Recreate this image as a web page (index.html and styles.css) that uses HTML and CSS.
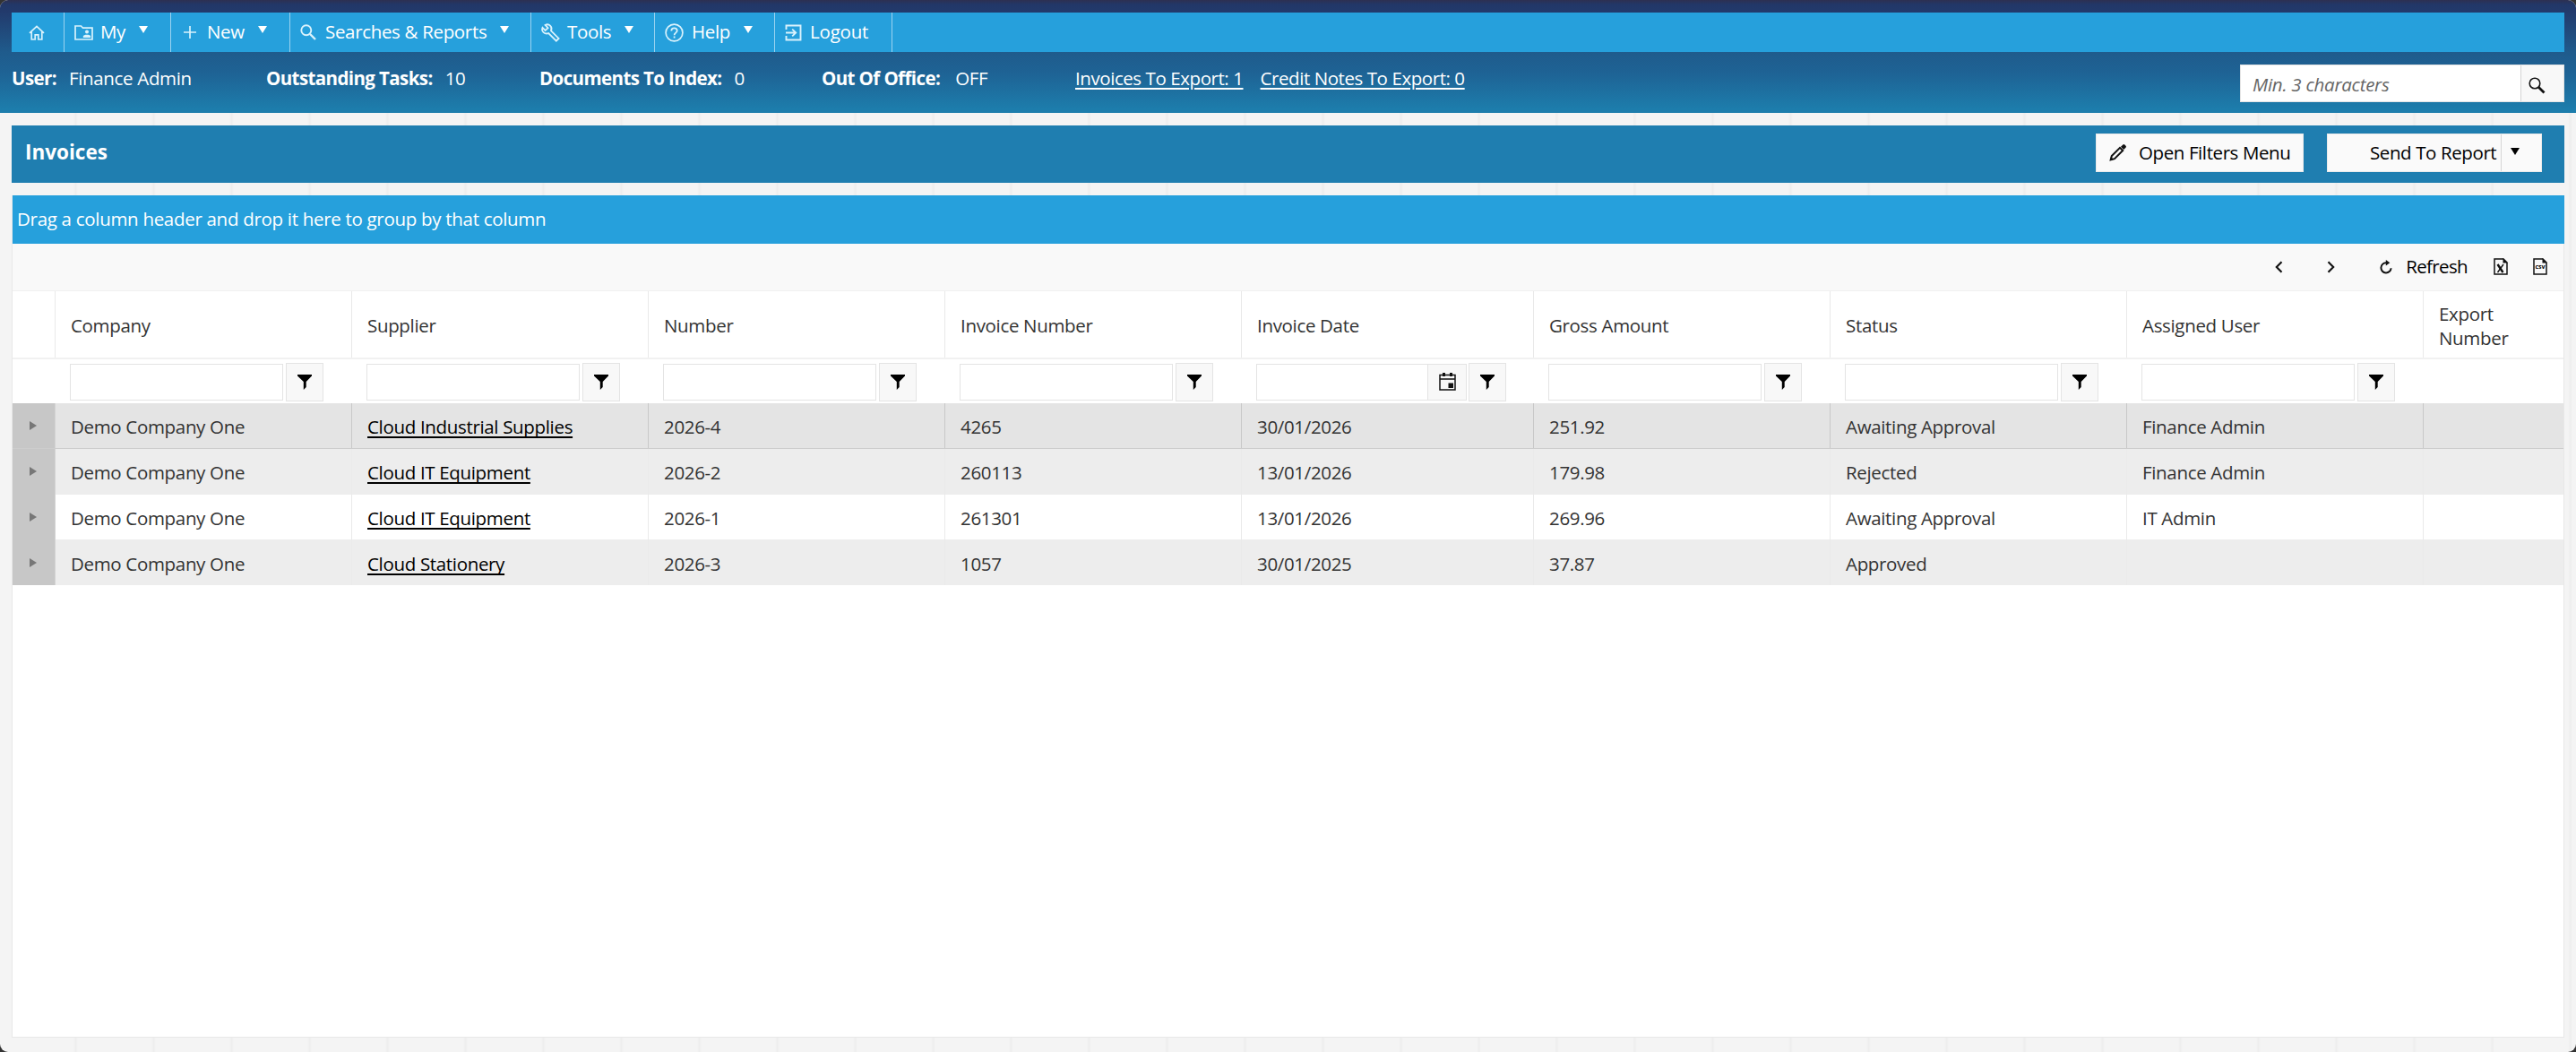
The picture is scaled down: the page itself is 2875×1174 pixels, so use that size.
FILE: index.html
```html
<!DOCTYPE html>
<html lang="en">
<head>
<meta charset="utf-8">
<title>Invoices</title>
<link rel="stylesheet" href="styles.css">
</head>
<body>
<div class="app">
  <header class="top">
    <nav class="menu">
      <a class="item home"><svg width="18" height="17" viewBox="0 0 18 17"><path d="M1 8.8 9 1.3l8 7.5M3.2 7.5V16h4v-5.2h3.6V16h4V7.5" fill="none" stroke="currentColor" stroke-width="1.7"/></svg></a>
      <a class="item my"><svg width="21" height="17" viewBox="0 0 21 17"><path d="M1 1h6.5l2 2.2H20V16H1z" fill="none" stroke="currentColor" stroke-width="1.7"/><circle cx="14" cy="7.6" r="2" fill="currentColor"/><path d="M9.8 14v-1.3c0-2.6 8.4-2.6 8.4 0V14z" fill="currentColor"/></svg><span>My</span><i class="caret"></i></a>
      <a class="item new"><svg width="14" height="14" viewBox="0 0 14 14"><path d="M7 0v14M0 7h14" stroke="currentColor" stroke-width="1.7"/></svg><span>New</span><i class="caret"></i></a>
      <a class="item searches"><svg width="18" height="18" viewBox="0 0 18 18"><circle cx="6.8" cy="6.8" r="5.5" fill="none" stroke="currentColor" stroke-width="1.9"/><path d="m11 11 6 6" stroke="currentColor" stroke-width="2.4"/></svg><span>Searches &amp; Reports</span><i class="caret"></i></a>
      <a class="item tools"><svg width="21" height="21" viewBox="0 0 21 21"><path d="M1.5 4.8 4.6 8l3-2.8L4.5 2C8.600 -.4 13 4 11 8.300l8.600 8.600-2.800 2.800L8.200 11.100C4 12.700-.2 8.800 1.500 4.800z" fill="none" stroke="currentColor" stroke-width="1.8"/></svg><span>Tools</span><i class="caret"></i></a>
      <a class="item help"><svg width="21" height="21" viewBox="0 0 21 21"><circle cx="10.500" cy="10.500" r="9.400" fill="none" stroke="currentColor" stroke-width="1.700"/><path d="M7.300 8.500c0-4.200 6.400-4 6.400-.2 0 2.300-3.100 2.400-3.100 4.900M10.600 14.600v2" fill="none" stroke="currentColor" stroke-width="1.800"/></svg><span>Help</span><i class="caret"></i></a>
      <a class="item logout"><svg width="19" height="19" viewBox="0 0 19 19"><path d="M1.500 6V1.500h16v16h-16V13M1 9.500h10.500M8.200 5.600l4 3.900-4 3.900" fill="none" stroke="currentColor" stroke-width="1.900"/></svg><span>Logout</span></a>
    </nav>
    <div class="status">
      <div class="stat user"><b>User:</b><span>Finance Admin</span></div>
      <div class="stat tasks"><b>Outstanding Tasks:</b><span>10</span></div>
      <div class="stat docs"><b>Documents To Index:</b><span>0</span></div>
      <div class="stat office"><b>Out Of Office:</b><span>OFF</span></div>
      <a class="export">Invoices To Export: 1</a>
      <a class="export">Credit Notes To Export: 0</a>
      <div class="search">
        <span class="hint">Min. 3 characters</span>
        <span class="go"><svg width="19" height="19" viewBox="0 0 19 19"><circle cx="7" cy="7" r="5.800" fill="none" stroke="#111" stroke-width="1.600"/><path d="m11.200 11.200 6.300 6.300" stroke="#111" stroke-width="2.800"/></svg></span>
      </div>
    </div>
  </header>

  <section class="titlebar">
    <h1>Invoices</h1>
    <button class="btn filters"><svg width="20" height="20" viewBox="0 0 20 20"><path d="M1.700 18.300 2.800 14 12 4.800l3.200 3.200L6 17.200z" fill="none" stroke="#111" stroke-width="2"/><path d="m13 3.800 2.300-2.300q1-1 2 0l1.200 1.200q1 1 0 2L16.200 7zM1 19l1-4 3 3z" fill="#111"/></svg><span>Open Filters Menu</span></button>
    <button class="btn report"><span class="label">Send To Report</span><span class="drop"><i class="caret"></i></span></button>
  </section>

  <main class="grid">
    <div class="groupbar">Drag a column header and drop it here to group by that column</div>
    <div class="toolbar">
      <svg class="prev" width="9" height="14" viewBox="0 0 9 14"><path d="M7.500 1.200 1.800 7l5.700 5.800" fill="none" stroke="#111" stroke-width="2.100"/></svg>
      <svg class="next" width="9" height="14" viewBox="0 0 9 14"><path d="M1.500 1.200 7.200 7l-5.700 5.800" fill="none" stroke="#111" stroke-width="2.100"/></svg>
      <svg class="reload" width="14" height="16" viewBox="0 0 14 16"><path d="M8.500 3.300H7a5.600 5.600 0 1 0 5.600 6" fill="none" stroke="#111" stroke-width="2"/><path d="M6.800 0v6.600l4.500-3.300z" fill="#111"/></svg>
      <span>Refresh</span>
      <svg class="excel" width="16" height="19" viewBox="0 0 16 19"><path d="M1 1h10l4 4v13H1z" fill="none" stroke="#111" stroke-width="1.500"/><path d="M10.500 0v5.500H16z" fill="#111"/><path d="m4.500 7 6 9" stroke="#111" stroke-width="2.400"/><path d="m11 7-6.500 9" stroke="#111" stroke-width="1.400"/></svg>
      <svg class="csv" width="16" height="19" viewBox="0 0 16 19"><path d="M1 1h10l4 4v13H1z" fill="none" stroke="#111" stroke-width="1.500"/><path d="M10.500 0v5.500H16z" fill="#111"/><text x="8" y="12.400" class="csvtext">csv</text></svg>
    </div>
    <div class="row head">
      <div></div><div>Company</div><div>Supplier</div><div>Number</div><div>Invoice Number</div><div>Invoice Date</div><div>Gross Amount</div><div>Status</div><div>Assigned User</div><div>Export<br>Number</div>
    </div>
    <svg class="defs" width="0" height="0"><symbol id="funnel" viewBox="0 0 16 17"><path d="M0 0h16v1.500L9.700 8v6L6.800 17V8L0 1.500z"/></symbol></svg>
    <div class="row filter">
      <div></div>
      <div><span class="box"></span><span class="fbtn"><svg width="16" height="17"><use href="#funnel"/></svg></span></div>
      <div><span class="box"></span><span class="fbtn"><svg width="16" height="17"><use href="#funnel"/></svg></span></div>
      <div><span class="box"></span><span class="fbtn"><svg width="16" height="17"><use href="#funnel"/></svg></span></div>
      <div><span class="box"></span><span class="fbtn"><svg width="16" height="17"><use href="#funnel"/></svg></span></div>
      <div class="datecell"><span class="box"><span class="cal"><svg width="19" height="20" viewBox="0 0 19 20"><path d="M1 2.500h17V19H1zM1 7h17" fill="none" stroke="#111" stroke-width="1.500"/><path d="M4 0h3v4H4zM12 0h3v4h-3zM10.500 11.500H16v5.500h-5.500z" fill="#111"/></svg></span></span><span class="fbtn"><svg width="16" height="17"><use href="#funnel"/></svg></span></div>
      <div><span class="box"></span><span class="fbtn"><svg width="16" height="17"><use href="#funnel"/></svg></span></div>
      <div><span class="box"></span><span class="fbtn"><svg width="16" height="17"><use href="#funnel"/></svg></span></div>
      <div><span class="box"></span><span class="fbtn"><svg width="16" height="17"><use href="#funnel"/></svg></span></div>
      <div></div>
    </div>
    <div class="row data selected"><div><i class="expand"></i></div><div>Demo Company One</div><div><a>Cloud Industrial Supplies</a></div><div>2026-4</div><div>4265</div><div>30/01/2026</div><div>251.92</div><div>Awaiting Approval</div><div>Finance Admin</div><div></div></div>
    <div class="row data alt"><div><i class="expand"></i></div><div>Demo Company One</div><div><a>Cloud IT Equipment</a></div><div>2026-2</div><div>260113</div><div>13/01/2026</div><div>179.98</div><div>Rejected</div><div>Finance Admin</div><div></div></div>
    <div class="row data"><div><i class="expand"></i></div><div>Demo Company One</div><div><a>Cloud IT Equipment</a></div><div>2026-1</div><div>261301</div><div>13/01/2026</div><div>269.96</div><div>Awaiting Approval</div><div>IT Admin</div><div></div></div>
    <div class="row data alt"><div><i class="expand"></i></div><div>Demo Company One</div><div><a>Cloud Stationery</a></div><div>2026-3</div><div>1057</div><div>30/01/2025</div><div>37.87</div><div>Approved</div><div></div><div></div></div>
  </main>
</div>
</body>
</html>
```
FILE: styles.css
```css
* { box-sizing: border-box; }
body {
  margin: 0;
  background: #333;
  font: 20.5px/27px "Open Sans", "Noto Sans", sans-serif;
  letter-spacing: -0.33px;
  color: #333;
}
svg { display: block; flex: none; overflow: visible; }
.app {
  height: 1174px;
  border-radius: 9px;
  overflow: hidden;
  display: flex;
  flex-direction: column;
  background: repeating-linear-gradient(90deg, #f4f4f4 0 83px, #eeeeee 84px 86px, #f4f4f4 87px) -0.5px 0, #f4f4f4;
}

/* header */
.top {
  height: 126px;
  padding: 14px 13px 0;
  color: #fff;
  background: linear-gradient(#2d3051 0, #223768 5px, #223a6c 13px, #1f5b8c 58px, #1e6395 82px, #1d7dac 122px);
}
.menu { display: flex; height: 44px; background: #26a0dc; }
.item {
  display: flex;
  align-items: center;
  border-right: 1px solid #9bd3f0;
  color: #fff;
}
.item svg { color: #d9f2fc; }
.item span { margin-top: -1px; white-space: nowrap; }
.item .caret { margin: -6px 0 0 15px; }
.caret {
  width: 0;
  border: 5px solid transparent;
  border-top: 8px solid currentColor;
  border-bottom: 0;
}
.home { width: 59px; padding-left: 19px; }
.my { width: 119px; padding-left: 11px; }
.my span { margin-left: 8px; }
.new { width: 133px; padding-left: 14px; }
.new span { margin-left: 12px; }
.searches { width: 269px; padding-left: 11px; }
.searches span { margin-left: 10px; }
.tools { width: 138px; padding-left: 11px; }
.tools span { margin-left: 8px; }
.help { width: 134px; padding-left: 11px; }
.help span { margin-left: 9px; }
.logout { width: 131px; padding-left: 11px; }
.logout span { margin-left: 9px; letter-spacing: -0.2px; }

.status { display: flex; padding-top: 16px; }
.stat { display: flex; gap: 14px; white-space: nowrap; }
.stat b { letter-spacing: -0.6px; }
.user { width: 284px; }
.tasks { width: 305px; }
.docs { width: 315px; }
.office { width: 283px; gap: 17px; }
.export {
  margin-right: 19px;
  white-space: nowrap;
  letter-spacing: -0.43px;
  text-decoration: underline 1.5px;
  text-underline-offset: 3px;
}
.search {
  width: 362px;
  height: 42px;
  margin: -2px 0 0 auto;
  display: flex;
  background: #fff;
  border: 1px solid #e4e4e4;
}
.hint { flex: 1; padding: 8px 13px; font-style: italic; color: #666; letter-spacing: -0.25px; }
.go { width: 48px; padding: 13px 0 0 8px; background: #f8f8f8; border-left: 1px solid #d4d4d4; }

/* title bar */
.titlebar {
  margin: 14px 13px 0;
  height: 64px;
  padding-right: 25px;
  display: flex;
  align-items: center;
  background: #1f7eb0;
}
h1 { margin: -5px auto 0 15px; font-size: 22.5px; color: #fff; letter-spacing: 0; }
.btn {
  height: 43px;
  margin: -4px 0 0;
  padding: 0;
  display: flex;
  align-items: center;
  font: inherit;
  letter-spacing: -0.4px;
  color: #000;
  background: #fafafa;
  border: 1px solid #eaeaea;
}
.filters { width: 232px; padding-left: 14px; margin-right: 26px; }
.filters span { margin-left: 13px; }
.report { width: 240px; }
.label { width: 193px; padding-left: 47px; text-align: left; white-space: nowrap; }
.drop { height: 100%; flex: 1; padding: 15px 0 0 10px; border-left: 1px solid #d6d6d6; }
.drop .caret { display: block; }

/* grid */
.grid {
  margin: 14px 13px 0;
  height: 940px;
  border: 1px solid #e8e8e8;
  border-top: 0;
  background: #fff;
}
.groupbar { height: 54px; margin: 0 -1px 0 0; padding: 13px 5px; background: #26a0dc; color: #fff; letter-spacing: -0.3px; }
.toolbar {
  height: 53px;
  display: flex;
  align-items: center;
  justify-content: flex-end;
  padding: 0 18px 1px 0;
  background: #f9f9f9;
  border-bottom: 1px solid #f0f0f0;
  color: #000;
}
.next { margin-left: 49px; }
.reload { margin: 0 15px 0 50px; }
.toolbar span { letter-spacing: -0.65px; }
.excel { margin-left: 29px; }
.csv { margin-left: 28px; }
.csvtext { font: 700 7px "Open Sans", sans-serif; text-anchor: middle; letter-spacing: 0; }
.row { display: grid; grid-template-columns: 48px 331px 331px 331px 331px 326px 331px 331px 331px 1fr; }
.row > div { padding: 3px 17px 0; display: flex; align-items: center; border-right: 1px solid transparent; white-space: nowrap; }
.row > div:last-child { border-right: 0; }
.head { height: 76px; border-bottom: 2px solid #f1f1f1; }
.head > div { border-right-color: #e9e9e9; }
.defs { position: absolute; }
.filter { height: 49px; }
.filter > div { padding: 3px 31px 2px 16px; gap: 3px; }
.filter > .datecell { padding-right: 30px; gap: 2px; }
.box { flex: 1; height: 41px; border: 1px solid #e4e4e4; display: flex; justify-content: flex-end; }
.cal { width: 43px; background: #f8f8f8; border-left: 1px solid #e4e4e4; display: flex; align-items: center; justify-content: center; }
.fbtn { width: 42px; height: 43px; border: 1px solid #e4e4e4; background: #f8f8f8; display: flex; align-items: center; justify-content: center; color: #000; }
.data { height: 50.75px; }
.data > div { border-right-color: #eaeaea; }
.data > div:first-child { padding: 0 0 0 19px; background: #c7c7c7; border-right-color: #d4d4d4; }
.data a { color: #000; text-decoration: underline 1.5px; text-underline-offset: 3px; text-decoration-skip-ink: none; }
.alt { background: #ededed; }
.selected { background: #e4e4e4; border-bottom: 1px solid #cdcdcd; }
.selected > div { border-right-color: #c8c8c8; }
.expand { border: 5px solid transparent; border-left: 8px solid #777; border-right: 0; }
```
